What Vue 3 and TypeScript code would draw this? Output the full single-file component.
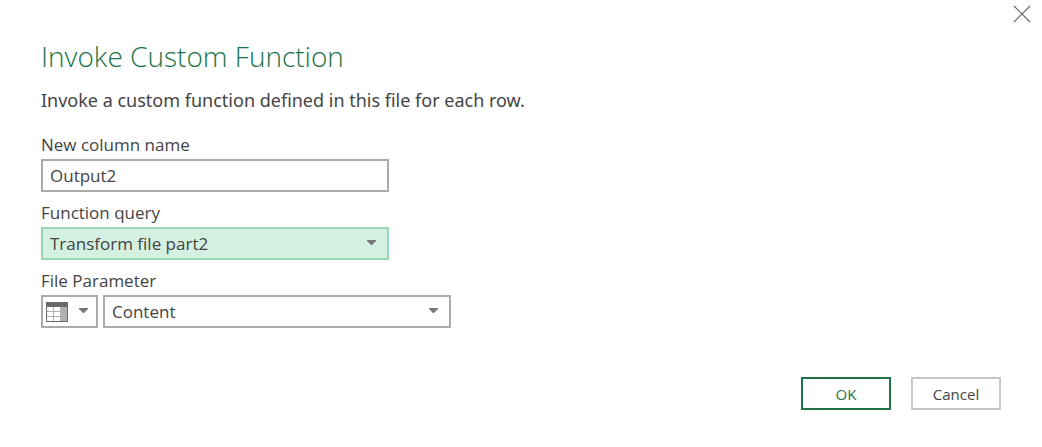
<script setup lang="ts">
import { ref } from 'vue'

const columnName = ref('Output2')
const functionQuery = ref('Transform file part2')
const parameterKind = ref('column')
const parameterValue = ref('Content')
</script>

<template>
  <main class="dialog" role="dialog" aria-labelledby="dialog-title">
    <button class="close" type="button" aria-label="Close">
      <svg width="18" height="18" viewBox="0 0 18 18" aria-hidden="true">
        <path d="M1 1L17 17M17 1L1 17" fill="none" stroke="#666" stroke-width="1.2" />
      </svg>
    </button>

    <h1 id="dialog-title" class="title">Invoke Custom Function</h1>
    <p class="description">Invoke a custom function defined in this file for each row.</p>

    <form class="form" @submit.prevent>
      <div class="field">
        <label for="column-name">New column name</label>
        <input id="column-name" v-model="columnName" class="box wide" type="text" />
      </div>

      <div class="field">
        <label for="function-query">Function query</label>
        <div class="picker wide">
          <select id="function-query" v-model="functionQuery" class="box active">
            <option>Transform file part2</option>
          </select>
          <svg class="arrow" width="9" height="5" viewBox="0 0 9 5" aria-hidden="true">
            <path d="M0 0H9V1L5 5H4L0 1Z" fill="#777" />
          </svg>
        </div>
      </div>

      <div class="field">
        <label for="file-parameter">File Parameter</label>
        <div class="row">
          <div class="picker kind">
            <select v-model="parameterKind" class="box" aria-label="Parameter kind">
              <option value="column" label=" "></option>
            </select>
            <svg class="table-icon" width="22" height="20" viewBox="0 0 22 20" aria-hidden="true">
              <rect x="0.5" y="0.5" width="21" height="19" fill="#fff" stroke="#696969" />
              <rect x="14" y="5" width="7" height="14" fill="#b1b1b1" />
              <path d="M1 9.5H14M1 14.5H14M7.5 5V19M14.5 5V19" fill="none" stroke="#b1b1b1" />
              <rect width="22" height="5" fill="#696969" />
            </svg>
            <svg class="arrow" width="9" height="5" viewBox="0 0 9 5" aria-hidden="true">
              <path d="M0 0H9V1L5 5H4L0 1Z" fill="#777" />
            </svg>
          </div>
          <div class="picker wide">
            <select id="file-parameter" v-model="parameterValue" class="box">
              <option>Content</option>
            </select>
            <svg class="arrow" width="9" height="5" viewBox="0 0 9 5" aria-hidden="true">
              <path d="M0 0H9V1L5 5H4L0 1Z" fill="#777" />
            </svg>
          </div>
        </div>
      </div>

      <div class="actions">
        <button class="action primary" type="submit">OK</button>
        <button class="action" type="button">Cancel</button>
      </div>
    </form>
  </main>
</template>

<style>
body {
  margin: 0;
  background: #fff;
}
</style>

<style scoped>
.dialog {
  position: relative;
  box-sizing: border-box;
  padding: 36px 41px;
  color: #444;
  font-family: "Open Sans", "Noto Sans", sans-serif;
  font-size: 17px;
}

.close {
  position: absolute;
  top: 5px;
  right: 11px;
  display: flex;
  padding: 0;
  border: 0;
  background: none;
}

.title {
  margin: 0;
  color: #217346;
  font-size: 28px;
  font-weight: 300;
  line-height: 40px;
}

.description {
  margin: 10px 0 0;
  font-family: "Noto Sans", "Open Sans", sans-serif;
  font-size: 18px;
  line-height: 28px;
}

.form {
  display: flex;
  flex-direction: column;
  gap: 8px;
  margin-top: 18px;
}

.field {
  display: flex;
  flex-direction: column;
  gap: 2px;
}

.field label {
  align-self: flex-start;
  line-height: 25px;
}

.row {
  display: flex;
  gap: 5px;
}

.wide {
  width: 348px;
  max-width: 100%;
}

.kind {
  width: 57px;
}

.picker {
  position: relative;
}

.box {
  display: block;
  box-sizing: border-box;
  height: 33px;
  padding: 0 7px;
  border: 2px solid #ababab;
  border-radius: 0;
  outline: 0;
  appearance: none;
  background: #fff;
  color: #444;
  font: inherit;
}

.picker .box {
  width: 100%;
}

.box.active {
  border-color: #9bd5b7;
  background: #d3f0e0;
}

.arrow {
  position: absolute;
  top: 13px;
  right: 13px;
  pointer-events: none;
}

.kind .arrow {
  right: 10px;
}

.table-icon {
  position: absolute;
  top: 7px;
  left: 5px;
  pointer-events: none;
}

.actions {
  display: flex;
  justify-content: flex-end;
  gap: 20px;
  margin-top: 41px;
}

.action {
  box-sizing: border-box;
  width: 90px;
  height: 33px;
  padding: 0;
  border: 2px solid #c6c6c6;
  background: #fff;
  color: #444;
  font: inherit;
  font-size: 15px;
}

.action.primary {
  border-color: #217346;
  color: #217346;
}
</style>
